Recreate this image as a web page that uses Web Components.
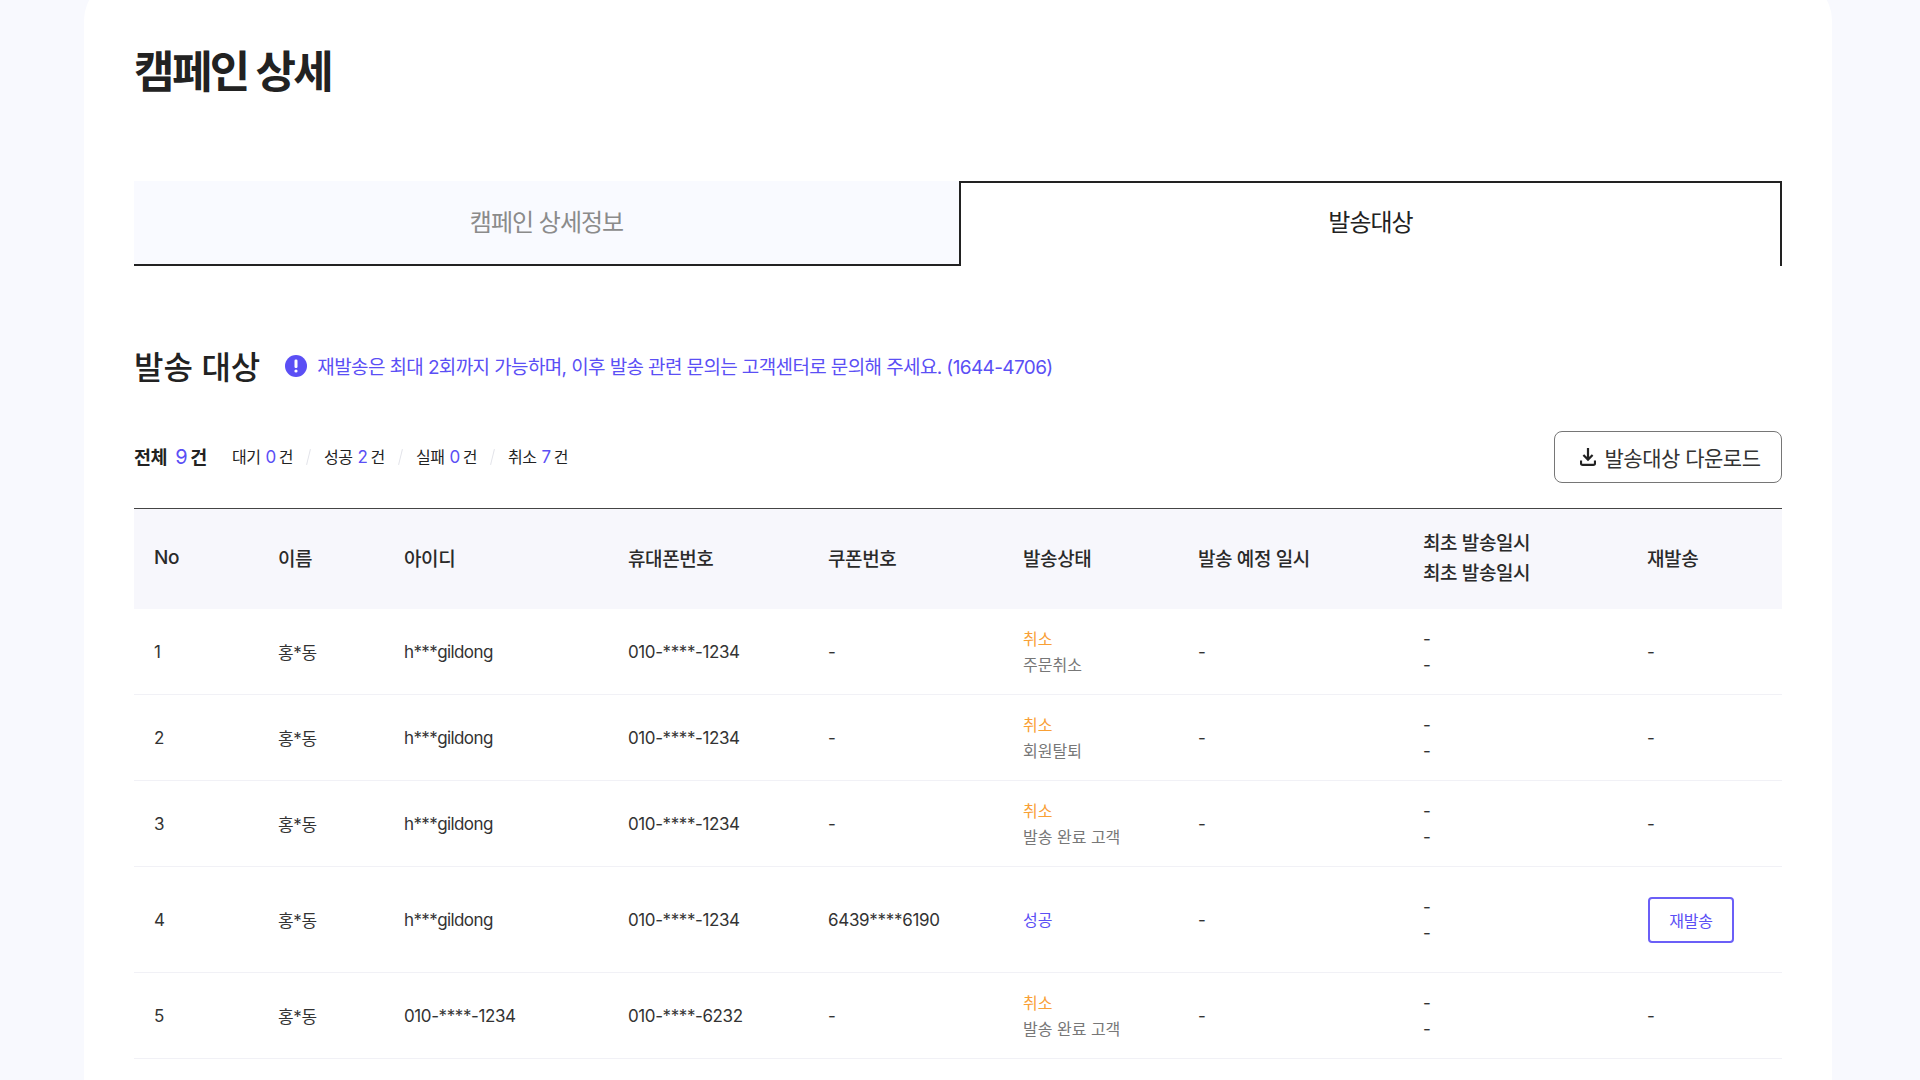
<!DOCTYPE html>
<html lang="ko">
<head>
<meta charset="utf-8">
<title>캠페인 상세</title>
<style>
  html, body { margin: 0; height: 100%; overflow: hidden; }
  body {
    background: #f8f9fe;
    color: #222;
    font-family: Inter, "Noto Sans CJK KR", "Noto Sans", sans-serif;
  }
</style>
</head>
<body>
<campaign-page>
  <page-title>캠페인 상세</page-title>
  <tab-bar>
    <tab-item>캠페인 상세정보</tab-item>
    <tab-item active>발송대상</tab-item>
  </tab-bar>
  <section-head note="재발송은 최대 2회까지 가능하며, 이후 발송 관련 문의는 고객센터로 문의해 주세요. (1644-4706)">발송 대상</section-head>
  <summary-bar></summary-bar>
  <target-table></target-table>
</campaign-page>

<script>
class CampaignPage extends HTMLElement {
  constructor() {
    super();
    this.attachShadow({mode: 'open'}).innerHTML = `
      <style>
        :host { display: block; width: 1748px; height: 1100px; margin: -20px 0 0 84px; box-sizing: border-box; padding: 20px 50px 0; background: #fff; border-radius: 40px 40px 0 0; overflow: hidden; }
      </style>
      <slot></slot>`;
  }
}

class PageTitle extends HTMLElement {
  constructor() {
    super();
    this.attachShadow({mode: 'open'}).innerHTML = `
      <style>
        :host { display: block; height: 181px; padding-top: 43px; box-sizing: border-box; font-size: 44px; font-weight: 700; line-height: 58px; letter-spacing: -2.6px; color: #222; }
      </style>
      <slot></slot>`;
  }
}

class TabBar extends HTMLElement {
  constructor() {
    super();
    this.attachShadow({mode: 'open'}).innerHTML = `
      <style>
        :host { display: grid; grid-template-columns: 825px 1fr; height: 85px; }
      </style>
      <slot></slot>`;
  }
}

class TabItem extends HTMLElement {
  constructor() {
    super();
    this.attachShadow({mode: 'open'}).innerHTML = `
      <style>
        :host { display: flex; align-items: center; justify-content: center; box-sizing: border-box; padding-bottom: 4px; font-size: 24px; letter-spacing: -1px; background: #f9faff; color: #8b8b8b; border-bottom: 2px solid #222; }
        :host([active]) { padding-bottom: 8px; background: #fff; color: #222; border: 2px solid #222; border-bottom: 0; }
      </style>
      <slot></slot>`;
  }
}

class SectionHead extends HTMLElement {
  constructor() {
    super();
    this.attachShadow({mode: 'open'}).innerHTML = `
      <style>
        :host { display: flex; align-items: center; height: 48px; margin-top: 75px; }
        h2 { margin: 0; font-size: 32px; font-weight: 500; letter-spacing: 0; color: #222; }
        .note { display: flex; align-items: center; gap: 10px; margin-left: 25px; font-size: 19px; letter-spacing: -0.62px; color: #5b4ff5; }
        svg { display: block; margin-top: 2px; }
      </style>
      <h2><slot></slot></h2>
      <div class="note">
        <svg width="22" height="22" viewBox="0 0 22 22"><circle cx="11" cy="11" r="11" fill="#5b4ff5"/><rect x="9.5" y="4.5" width="3" height="8.5" rx="1.2" fill="#fff"/><circle cx="11" cy="16" r="1.6" fill="#fff"/></svg>
        <span></span>
      </div>`;
    this.shadowRoot.querySelector('span').textContent = this.getAttribute('note');
  }
}

class SummaryBar extends HTMLElement {
  constructor() {
    super();
    const items = [['대기', 0], ['성공', 2], ['실패', 0], ['취소', 7]];
    this.attachShadow({mode: 'open'}).innerHTML = `
      <style>
        :host { display: flex; align-items: center; height: 52px; margin-top: 42px; }
        .total { font-size: 18.5px; font-weight: 700; letter-spacing: -0.4px; margin: 0 25px 2px 0; }
        .total b { font-weight: 400; color: #5b4ff5; margin: 0 3px 0 8px; font-size: 20px; }
        .item { width: 62px; margin-bottom: 2px; font-size: 16px; letter-spacing: -0.4px; white-space: nowrap; }
        .item b { font-weight: 400; color: #5b4ff5; margin: 0 3px 0 5px; font-size: 17px; }
        .sep { flex: none; width: 1px; height: 16px; margin: 0 15px 0 14px; background: #e3e4ea; transform: rotate(14deg); }
        button { display: flex; align-items: center; gap: 9px; margin-left: auto; box-sizing: border-box; width: 228px; height: 52px; padding: 0 0 0 4px; justify-content: center; background: #fff; border: 1px solid #767676; border-radius: 8px; font: inherit; font-size: 21px; letter-spacing: -0.5px; color: #333; }
        svg { display: block; flex: none; }
      </style>
      <div class="total">전체<b>9</b>건</div>
      ${items.map((it, i) => `${i ? '<i class="sep"></i>' : ''}<div class="item">${it[0]}<b>${it[1]}</b>건</div>`).join('')}
      <button>
        <svg width="16" height="18" viewBox="0 0 16 18" fill="none" stroke="#222" stroke-width="2.2"><path d="M8 0v11.5M3.4 7 8 11.6 12.6 7"/><path d="M1 12.6v2.6c0 1 .6 1.6 1.6 1.6h10.8c1 0 1.6-.6 1.6-1.6v-2.6"/></svg>
        발송대상 다운로드
      </button>`;
  }
}

class TargetTable extends HTMLElement {
  constructor() {
    super();
    const rows = [
      ['1', 'h***gildong', '010-****-1234', '-', ['cancel', '주문취소'], false],
      ['2', 'h***gildong', '010-****-1234', '-', ['cancel', '회원탈퇴'], false],
      ['3', 'h***gildong', '010-****-1234', '-', ['cancel', '발송 완료 고객'], false],
      ['4', 'h***gildong', '010-****-1234', '6439****6190', ['ok'], true],
      ['5', '010-****-1234', '010-****-6232', '-', ['cancel', '발송 완료 고객'], false]
    ];
    const status = s => s[0] === 'ok'
      ? '<span class="ok">성공</span>'
      : `<span class="cancel">취소</span><span class="reason">${s[1]}</span>`;
    const idClass = id => id.startsWith('h') ? 'user' : 'phone';
    this.attachShadow({mode: 'open'}).innerHTML = `
      <style>
        :host { display: block; margin-top: 25px; border-top: 1px solid #444; }
        .row { display: grid; grid-template-columns: 124px 126px 224px 200px 195px 175px 225px 224px 155px; align-items: center; height: 86px; border-bottom: 1px solid #f1f1f6; box-sizing: border-box; font-size: 17px; letter-spacing: -0.3px; color: #333; }
        .row.tall { height: 106px; }
        .head { height: 100px; border-bottom: 0; background: #f7f7fc; color: #2a2a2a; font-size: 19px; letter-spacing: -0.4px; font-weight: 500; }
        .row > div { padding-left: 20px; }
        .head > div:not(.stack) { padding-bottom: 3px; }
        .row > .user { letter-spacing: -0.6px; }
        .row > .phone { letter-spacing: -0.4px; }
        .stack { display: flex; flex-direction: column; line-height: 26px; }
        .cancel { color: #f9a035; font-size: 16px; letter-spacing: 0; }
        .reason { color: #777; font-size: 16px; letter-spacing: 0; }
        .ok { color: #5b4ff5; font-size: 16px; letter-spacing: 0; }
        .head .stack { line-height: 30px; }
        button { display: block; width: 86px; height: 46px; margin-left: 1px; background: #fff; border: 2px solid #6b5ff7; border-radius: 4px; font: inherit; font-size: 16px; letter-spacing: -0.3px; color: #5b4ff5; }
      </style>
      <div class="row head">
        <div>No</div><div>이름</div><div>아이디</div><div>휴대폰번호</div><div>쿠폰번호</div><div>발송상태</div><div>발송 예정 일시</div>
        <div class="stack"><span>최초 발송일시</span><span>최초 발송일시</span></div>
        <div>재발송</div>
      </div>
      ${rows.map(r => `
      <div class="row${r[5] ? ' tall' : ''}">
        <div>${r[0]}</div><div>홍*동</div><div class="${idClass(r[1])}">${r[1]}</div><div class="phone">${r[2]}</div><div>${r[3]}</div>
        <div class="stack">${status(r[4])}</div>
        <div>-</div>
        <div class="stack"><span>-</span><span>-</span></div>
        <div>${r[5] ? '<button>재발송</button>' : '-'}</div>
      </div>`).join('')}`;
  }
}

customElements.define('campaign-page', CampaignPage);
customElements.define('page-title', PageTitle);
customElements.define('tab-bar', TabBar);
customElements.define('tab-item', TabItem);
customElements.define('section-head', SectionHead);
customElements.define('summary-bar', SummaryBar);
customElements.define('target-table', TargetTable);
</script>
</body>
</html>
